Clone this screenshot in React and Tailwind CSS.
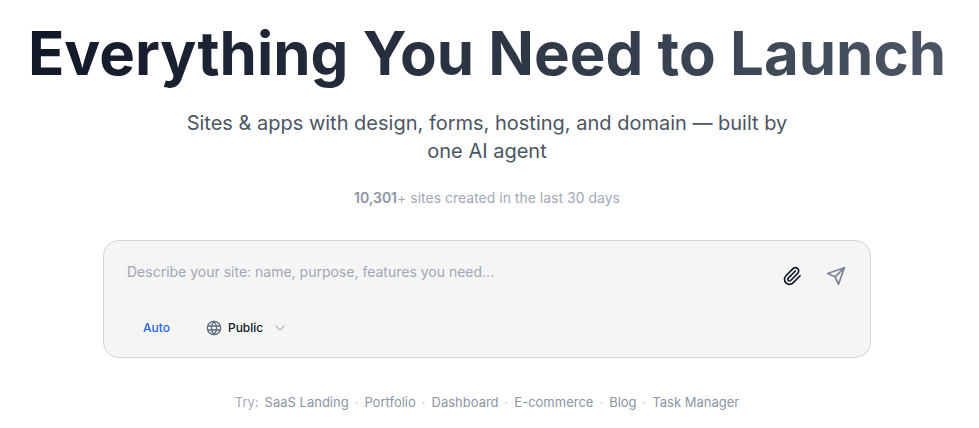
import { ChevronDown, Paperclip } from 'lucide-react';

const examples = ['SaaS Landing', 'Portfolio', 'Dashboard', 'E-commerce', 'Blog', 'Task Manager'];

// two-latitude globe, lucide's only has the one
function GlobeIcon() {
  return (
    <svg width="16" height="16" viewBox="0 0 24 24" fill="none" stroke="currentColor" strokeWidth="2" strokeLinecap="round" strokeLinejoin="round" className="text-[#5f6b7d]">
      <circle cx="12" cy="12" r="10" />
      <path d="M3 9h18M3 15h18" />
      <path d="M12 2a15 15 0 0 1 0 20a15 15 0 0 1 0-20" />
    </svg>
  );
}

function SendIcon() {
  return (
    <svg width="20" height="20" viewBox="0 0 24 24" fill="none" stroke="currentColor" strokeWidth="2" strokeLinecap="round" strokeLinejoin="round" className="text-[#7b8494]">
      <path d="m22 2-7 20-4-9-9-4Z" />
      <path d="M22 2 11 13" />
    </svg>
  );
}

function App() {
  return (
    <div className="min-h-screen bg-white font-['Inter',sans-serif] flex flex-col items-center pt-[16px] pr-[5px]">
      <h1 className="text-[60px] leading-[75px] font-bold text-center bg-gradient-to-r from-[#111827] to-[#4b5563] bg-clip-text text-transparent whitespace-nowrap">
        Everything You Need to Launch
      </h1>

      <p className="mt-[18px] w-[640px] text-center text-[20px] leading-[28px] text-[#4b5563]">
        Sites &amp; apps with design, forms, hosting, and domain — built by one AI agent
      </p>

      <p className="mt-[23px] text-sm leading-5 text-[#a0a9b8]">
        <span className="font-semibold text-[#8a94a6]">10,301</span>+ sites created in the last 30 days
      </p>

      <div className="mt-[32px] w-[768px] h-[118px] rounded-2xl border border-[#d1d5db] bg-[#f5f5f5] pl-[23px] pr-[24px] pt-[21px]">
        <div className="flex items-start justify-between">
          <span className="text-sm leading-5 text-[#a0a7b5]">Describe your site: name, purpose, features you need...</span>
          <div className="flex items-center gap-[24px] pt-[4px]">
            <Paperclip size={20} className="text-[#111827]" />
            <SendIcon />
          </div>
        </div>
        <div className="mt-[34px] flex items-center pl-[16px]">
          <span className="text-xs font-medium text-[#2563eb]">Auto</span>
          <div className="ml-[36px] flex items-center">
            <GlobeIcon />
            <span className="ml-[6px] text-xs font-medium text-[#111827]">Public</span>
            <ChevronDown size={16} className="ml-[9px] text-[#b4b9c2]" />
          </div>
        </div>
      </div>

      <div className="mt-[35px] flex items-center text-[13px] text-[#8b95a7]">
        <span className="text-[#a0a9b8] mr-[6px]">Try:</span>
        {examples.map((label, i) => (
          <span key={label} className="flex items-center">
            {i > 0 && <span className="mx-[6px] text-[#c0c5ce]">·</span>}
            <span>{label}</span>
          </span>
        ))}
      </div>
    </div>
  );
}

export default App;
